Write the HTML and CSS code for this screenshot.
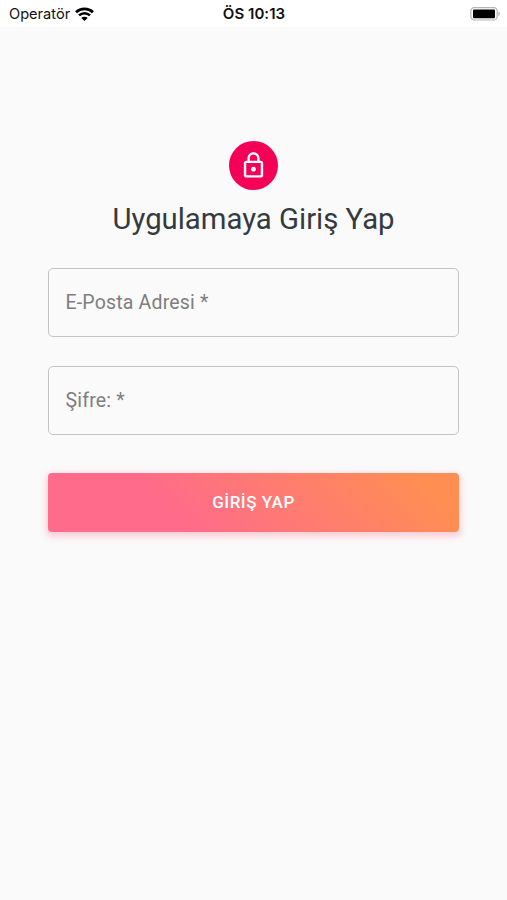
FILE: index.html
```html
<!DOCTYPE html>
<html lang="tr">
<head>
    <meta charset="UTF-8">
    <meta name="viewport" content="width=device-width, initial-scale=1.0">
    <title>Uygulamaya Giriş Yap</title>
    <link rel="stylesheet" href="styles.css">
</head>
<body>
    <!-- Durum çubuğu -->
    <div class="status-bar">
        <div class="carrier">
            <span>Operatör</span>
            <svg class="wifi" viewBox="0 0 18 14" width="19" height="14" preserveAspectRatio="none">
                <path d="M1 5.2a11.4 11.4 0 0 1 16 0" fill="none" stroke="#000" stroke-width="2.6"/>
                <path d="M3.8 8.4a7.3 7.3 0 0 1 10.4 0" fill="none" stroke="#000" stroke-width="2.4"/>
                <path d="M9 14L6 10.9a4.2 4.2 0 0 1 6 0z"/>
            </svg>
        </div>
        <div class="clock">ÖS 10:13</div>
        <div class="battery">
            <svg viewBox="0 0 31 14" width="31" height="14">
                <rect x="0.8" y="0.6" width="26.4" height="12.4" rx="3.6" fill="#fff" stroke="#b4b4b4" stroke-width="1.2"/>
                <rect x="3" y="2.4" width="22" height="8.8" rx="1"/>
                <path d="M28.4 4.6a2.4 2.4 0 0 1 0 4.4z" fill="#b4b4b4"/>
            </svg>
        </div>
    </div>

    <!-- Giriş formu -->
    <main class="login">
        <div class="avatar">
            <svg viewBox="0 0 24 24" width="29" height="29" fill="#fff">
                <path d="M12 17c1.1 0 2-.9 2-2s-.9-2-2-2-2 .9-2 2 .9 2 2 2zm6-9h-1V6c0-2.76-2.24-5-5-5S7 3.24 7 6v2H6c-1.1 0-2 .9-2 2v10c0 1.1.9 2 2 2h12c1.1 0 2-.9 2-2V10c0-1.1-.9-2-2-2zM8.9 6c0-1.71 1.39-3.1 3.1-3.1s3.1 1.39 3.1 3.1v2H8.9V6zM18 20H6V10h12v10z"/>
            </svg>
        </div>
        <h1 class="title">Uygulamaya Giriş Yap</h1>
        <form class="form">
            <input class="field" type="email" placeholder="E-Posta Adresi *" aria-label="E-Posta Adresi">
            <input class="field" type="password" placeholder="Şifre: *" aria-label="Şifre">
            <button class="submit" type="button">GİRİŞ YAP</button>
        </form>
    </main>
</body>
</html>
```
FILE: styles.css
```css
* {
    box-sizing: border-box;
}
body {
    margin: 0;
    min-height: 100vh;
    background-color: #fafafa;
    font-family: Roboto, sans-serif;
    color: #343a40;
}
.status-bar {
    display: grid;
    grid-template-columns: 1fr auto 1fr;
    align-items: center;
    height: 27px;
    padding: 0 6px 0 9px;
    background-color: #fff;
    font-family: Inter, sans-serif;
    font-size: 14.6px;
    color: #111;
}
.carrier {
    display: flex;
    align-items: center;
    gap: 5px;
}
.clock {
    font-weight: 600;
    font-size: 15px;
    letter-spacing: 0.05px;
    margin-right: 2px;
}
.battery {
    display: flex;
    justify-content: flex-end;
}
.login {
    display: flex;
    flex-direction: column;
    align-items: center;
    padding: 114.4px 48px 0;
}
.avatar {
    display: flex;
    align-items: center;
    justify-content: center;
    width: 49px;
    height: 49px;
    border-radius: 50%;
    background-color: #f50057;
}
.title {
    margin: 10px 0 0;
    font-size: 29.3px;
    font-weight: 400;
    line-height: 39px;
}
.form {
    display: flex;
    flex-direction: column;
    width: 411px;
    margin-top: 29px;
}
.field {
    height: 69px;
    margin-bottom: 29px;
    padding: 0 16.5px;
    border: 1px solid #c4c4c4;
    border-radius: 5px;
    background-color: transparent;
    font-family: inherit;
    font-size: 19.5px;
    letter-spacing: 0.18px;
}
.field::placeholder {
    color: #7e7e7e;
    opacity: 1;
}
.submit {
    height: 59px;
    margin-top: 9px;
    padding: 0 0 2px;
    border: 0;
    border-radius: 4px;
    background: linear-gradient(45deg, #fe6b8b 30%, #ff8e53 90%);
    box-shadow: 0 3px 6px 2px rgba(255, 105, 135, 0.3);
    color: #fff;
    font-family: inherit;
    font-size: 17px;
    font-weight: 500;
    letter-spacing: 0.5px;
}
```
